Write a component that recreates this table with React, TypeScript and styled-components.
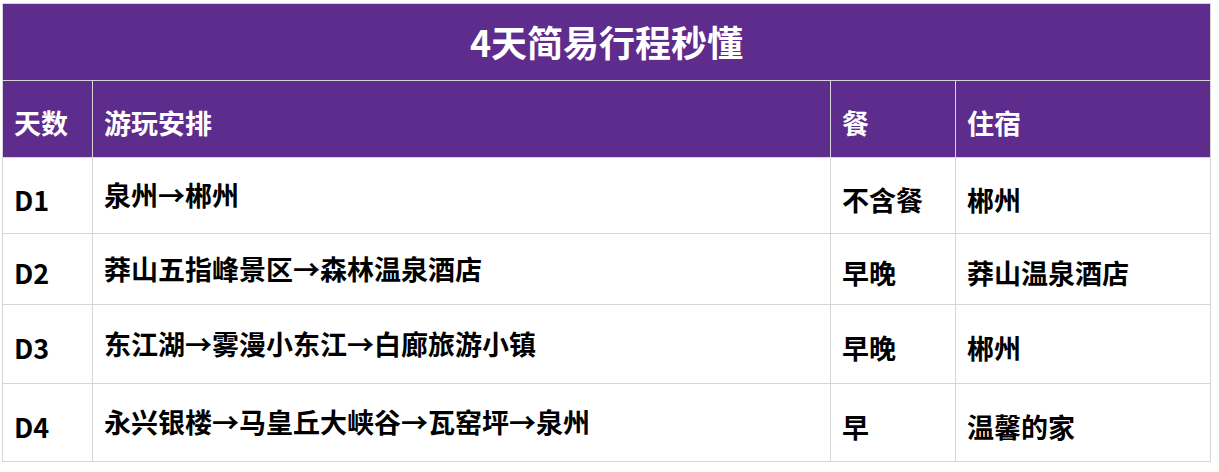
import React from "react"
import styled, { createGlobalStyle } from "styled-components"

const Purple = "#5e2c8c"
const Line = "#d6d6d6"

const GlobalStyle = createGlobalStyle`
  html, body {
    margin: 0;
    padding: 0;
    background: #ffffff;
  }
  body {
    font-family: "Noto Sans CJK SC", "Noto Sans", sans-serif;
  }
`

type Day = {
  day: string
  route: string
  meal: string
  stay: string
  h: number
}

const days: Day[] = [
  { day: "D1", route: "泉州→郴州", meal: "不含餐", stay: "郴州", h: 76 },
  { day: "D2", route: "莽山五指峰景区→森林温泉酒店", meal: "早晚", stay: "莽山温泉酒店", h: 71 },
  { day: "D3", route: "东江湖→雾漫小东江→白廊旅游小镇", meal: "早晚", stay: "郴州", h: 79 },
  { day: "D4", route: "永兴银楼→马皇丘大峡谷→瓦窑坪→泉州", meal: "早", stay: "温馨的家", h: 78 },
]

export default function App() {
  return (
    <>
      <GlobalStyle />
      <Page>
        <Table>
          <colgroup>
            <col style={{ width: 90 }} />
            <col style={{ width: 738 }} />
            <col style={{ width: 125 }} />
            <col style={{ width: 255 }} />
          </colgroup>
          <thead>
            <tr>
              <TitleCell colSpan={4}>4天简易行程秒懂</TitleCell>
            </tr>
            <tr>
              <HeadCell>天数</HeadCell>
              <HeadCell>游玩安排</HeadCell>
              <HeadCell>餐</HeadCell>
              <HeadCell>住宿</HeadCell>
            </tr>
          </thead>
          <tbody>
            {days.map((d) => (
              <tr key={d.day}>
                <Cell $h={d.h}>{d.day}</Cell>
                <Cell $h={d.h} $raised>
                  {d.route}
                </Cell>
                <Cell $h={d.h}>{d.meal}</Cell>
                <Cell $h={d.h}>{d.stay}</Cell>
              </tr>
            ))}
          </tbody>
        </Table>
      </Page>
    </>
  )
}

const Page = styled.div`
  padding: 3px 0 0 2px;
`

const Table = styled.table`
  table-layout: fixed;
  width: 1209px;
  border-collapse: separate;
  border-spacing: 0;
  border-left: 1px solid ${Line};
  border-top: 1px solid ${Line};
`

const BaseCell = styled.td`
  box-sizing: border-box;
  border-right: 1px solid ${Line};
  border-bottom: 1px solid ${Line};
  font-weight: 700;
  line-height: 1.2;
  vertical-align: middle;
  white-space: nowrap;
`

const TitleCell = styled(BaseCell).attrs({ as: "th" })`
  height: 77px;
  background: ${Purple};
  color: #ffffff;
  font-size: 36px;
  text-align: center;
  padding: 0;
`

const HeadCell = styled(BaseCell).attrs({ as: "th" })`
  height: 77px;
  background: ${Purple};
  color: #ffffff;
  font-size: 27px;
  text-align: left;
  padding: 9px 0 0 11px;
`

const Cell = styled(BaseCell)<{ $h: number; $raised?: boolean }>`
  height: ${(p) => p.$h}px;
  background: #ffffff;
  color: #000000;
  font-size: 27px;
  text-align: left;
  padding: ${(p) => (p.$raised ? "0 0 0 11px" : "9px 0 0 11px")};
`
